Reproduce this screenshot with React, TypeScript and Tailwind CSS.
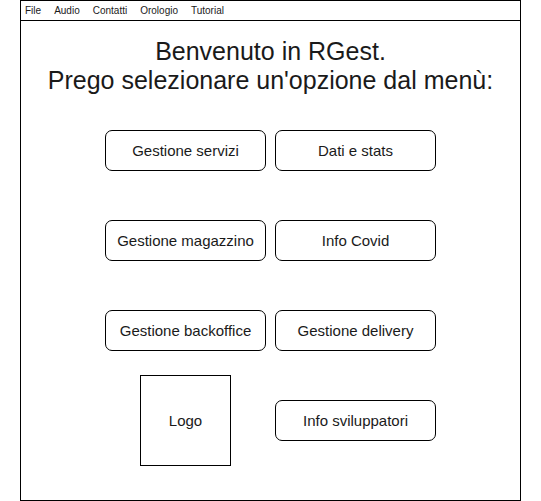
const menu = ['File', 'Audio', 'Contatti', 'Orologio', 'Tutorial'];

const buttons = [
  'Gestione servizi',
  'Dati e stats',
  'Gestione magazzino',
  'Info Covid',
  'Gestione backoffice',
  'Gestione delivery',
];

export default function App() {
  return (
    <div className="w-[541px] h-[501px] bg-white font-['Liberation_Sans',Arial,sans-serif] text-[#1a1a1a]">
      <div className="ml-[20px] w-[501px] h-[501px] border border-black flex flex-col">
        {/* Menu bar */}
        <div className="h-[20px] border-b border-black flex items-center gap-[13px] pl-[4px] text-[10px] leading-none">
          {menu.map((m) => (
            <span key={m}>{m}</span>
          ))}
        </div>

        {/* Welcome */}
        <div className="mt-[16px] text-center text-[25px] leading-[29px]">
          <p>Benvenuto in RGest.</p>
          <p>Prego selezionare un'opzione dal menù:</p>
        </div>

        {/* Options */}
        <div className="mt-[35px] self-center grid grid-cols-[161px_161px] grid-rows-[41px_41px_41px_41px] gap-x-[9px] gap-y-[49px]">
          {buttons.map((b) => (
            <button
              key={b}
              className="border border-black rounded-[7px] bg-white text-[15px] pt-px flex items-center justify-center"
            >
              {b}
            </button>
          ))}
          <div className="self-center justify-self-center w-[91px] h-[91px] border border-black flex items-center justify-center text-[15px] pt-px">
            Logo
          </div>
          <button className="border border-black rounded-[7px] bg-white text-[15px] pt-px flex items-center justify-center">
            Info sviluppatori
          </button>
        </div>
      </div>
    </div>
  );
}
